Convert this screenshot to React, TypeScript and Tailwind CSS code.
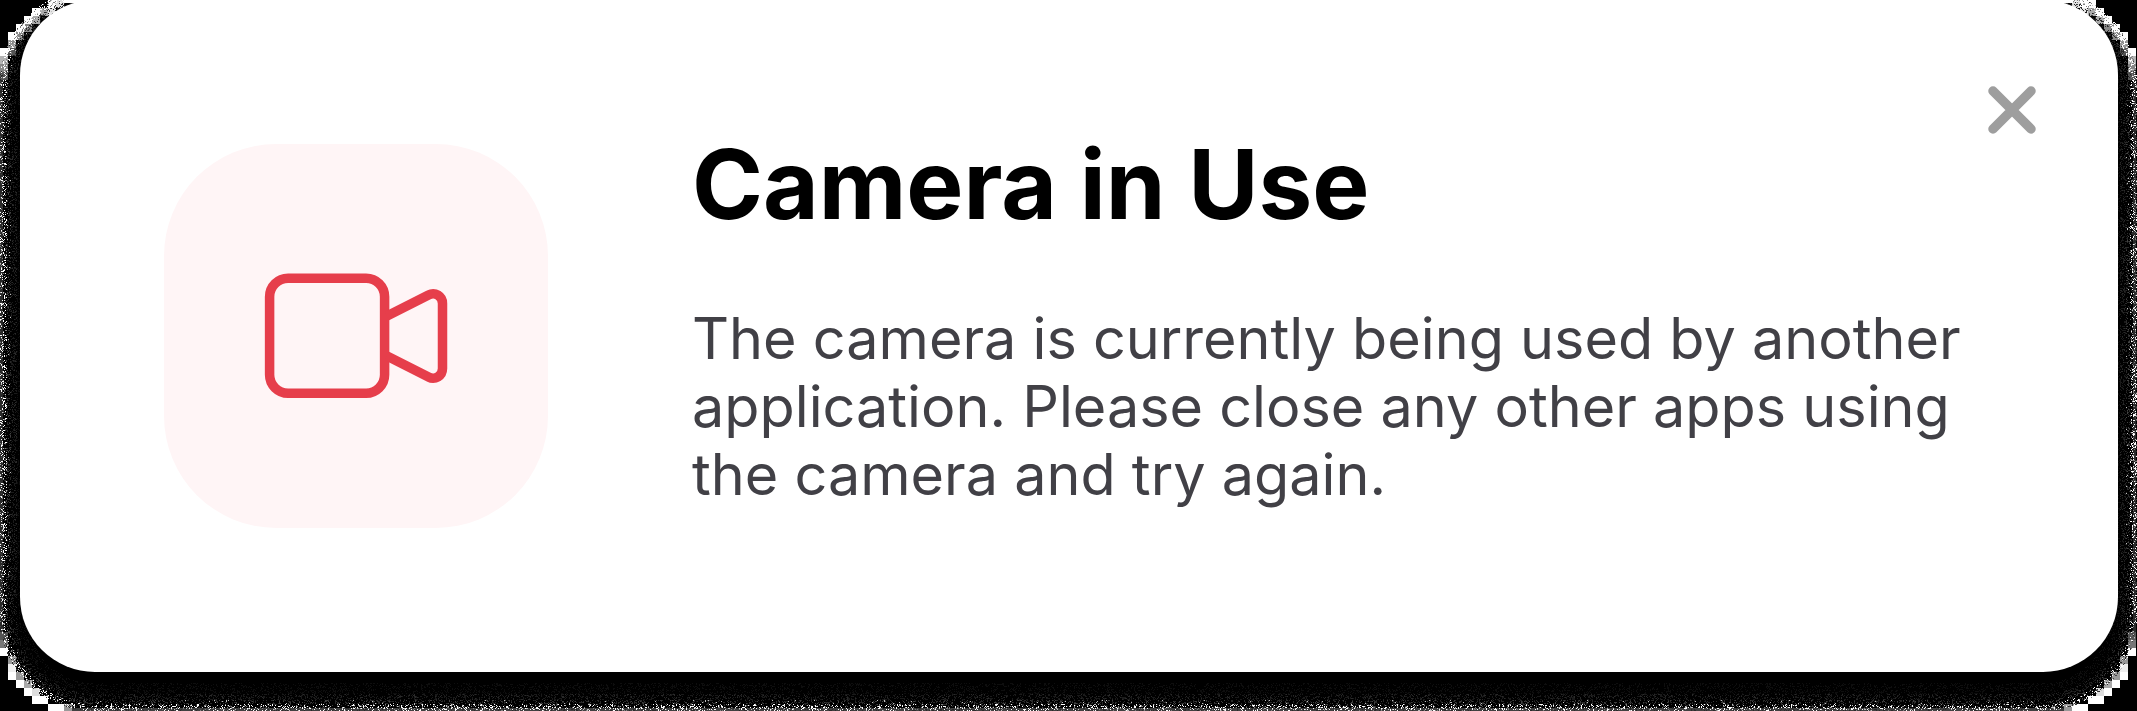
const FONT = "font-['Inter',sans-serif]";

type Cell = [number, number, string];

const SHADES = ["#0e0e0e", "#1a1a1a", "#2a2a2a", "#424242", "#808080", "#c0c0c0", "#ffffff"];

const WIDTH = 2137;
const HEIGHT = 711;

/* Distance to the rounded outline of the shadow, which is lower than the card. */
function shadowDistance(x: number, y: number) {
  const r = 94;
  const dx = Math.abs(x - 1068.5) - (1068.5 - r);
  const dy = Math.abs(y - 350) - (361 - r);
  const outside = Math.hypot(Math.max(dx, 0), Math.max(dy, 0));
  return r - outside - Math.min(Math.max(dx, dy), 0);
}

function inCard(x: number, y: number) {
  const r = 75;
  const dx = Math.max(Math.abs(x - 1069) - (1049 - r), 0);
  const dy = Math.max(Math.abs(y - 336) - (336 - r), 0);
  return Math.hypot(dx, dy) < r - 1;
}

function buildGrain() {
  const paths = SHADES.map(() => "");
  let seed = 7919;
  const random = () => {
    seed = (Math.imul(seed, 1664525) + 1013904223) >>> 0;
    return seed / 4294967296;
  };
  for (let y = 0; y < HEIGHT; y++) {
    for (let x = 0; x < WIDTH; x++) {
      if (x === 24 && y > 75 && y < 597) x = 2114;
      if (x === 100 && y < 670) x = 2037;
      if (inCard(x + 0.5, y + 0.5)) continue;
      const d = shadowDistance(x + 0.5, y + 0.5);
      if (d < 0) continue;
      const n = random();
      const m = random();
      const light = y < 70 ? 0.45 : 0.26;
      let shade = -1;
      if (d < 7 && n < light - Math.abs(d - 3.5) * 0.03) shade = m < 0.6 ? 6 : m < 0.75 ? 5 : 4;
      else if (d < 11 && n < 0.45 - d * 0.02) shade = m < 0.06 ? 5 : m < 0.35 ? 3 : 2;
      else if (d < 17 && n < 0.3) shade = m < 0.2 ? 2 : 1;
      else if (d < 28 && n < 0.22) shade = 0;
      if (shade >= 0) paths[shade] += `M${x} ${y}h1v1h-1z`;
    }
  }
  return paths;
}

const GRAIN = buildGrain();

/* Eight-pixel steps along the outer corners: column, row, colour. */
const STEPS: Cell[] = [
  [6, 0, "#fff"], [7, 0, "#e0e0e0"], [5, 1, "#aaa"], [4, 1, "#fff"], [6, 1, "#e5e5e5"],
  [3, 2, "#fff"], [4, 2, "#aaa"], [2, 3, "#fff"], [3, 3, "#888"], [1, 4, "#fff"], [2, 4, "#888"],
  [1, 5, "#999"], [0, 6, "#fff"], [1, 6, "#555"], [0, 7, "#b4b4b4"], [0, 8, "#888"], [0, 9, "#555"],
];

const BOTTOM_STEPS: Cell[] = [
  [0, 79, "#555"], [0, 80, "#777"], [0, 81, "#fff"], [1, 82, "#999"], [1, 83, "#eee"], [1, 84, "#fff"],
  [2, 84, "#999"], [2, 85, "#fff"], [3, 85, "#aaa"], [3, 86, "#fff"], [4, 86, "#ddd"], [4, 87, "#fff"],
  [5, 87, "#fff"], [6, 88, "#fff"], [7, 88, "#fff"], [8, 88, "#999"],
];

function Steps({ cells }: { cells: Cell[] }) {
  return (
    <>
      {cells.map(([c, r, fill]) => (
        <rect key={`${c}-${r}`} x={c * 8} y={r * 8} width="8" height="8" fill={fill} />
      ))}
    </>
  );
}

function Corners() {
  return (
    <>
      <Steps cells={STEPS} />
      <Steps cells={BOTTOM_STEPS} />
      <rect x="0" y="80" width="3" height="552" fill="#2a2a2a" />
    </>
  );
}

function ShadowTexture() {
  return (
    <svg
      className="pointer-events-none absolute inset-0"
      width="2137"
      height="711"
      viewBox="0 0 2137 711"
      shapeRendering="crispEdges"
      aria-hidden="true"
    >
      <rect x="72" y="708" width="1992" height="3" fill="#404040" />
      <Corners />
      <g transform="translate(2136 0) scale(-1 1)">
        <Corners />
        <rect x="40" y="0" width="8" height="8" fill="#fff" />
      </g>
      {GRAIN.map((d, i) => (
        <path key={SHADES[i]} d={d} fill={SHADES[i]} />
      ))}
      <path d="M64 0H104V3H64zM2033 0H2073V3H2033z" fill="#fff" />
    </svg>
  );
}

function CameraIcon() {
  return (
    <svg width="192" height="192" viewBox="260 240 192 192" fill="none" stroke="#e63e4b" strokeWidth="9.5" aria-hidden="true">
      <rect x="269.6" y="278.2" width="115" height="115" rx="18.5" />
      <path d="M387 316 L428.5 295 C435 291.5 442.5 296 442.5 303.5 V368.5 C442.5 376 435 380.5 428.5 377 L387 356" />
    </svg>
  );
}

export default function App() {
  return (
    <main className={`relative h-[711px] w-[2137px] overflow-hidden bg-black px-5 ${FONT}`}>
      <ShadowTexture />
      <section className="relative flex h-[672px] w-[2098px] items-start rounded-[75px] bg-white pt-36 pl-36">
        <div className="flex size-96 shrink-0 items-center justify-center rounded-[112px] bg-[#fff5f6]">
          <CameraIcon />
        </div>
        <div className="ml-36 w-[1300px] shrink-0">
          <h1 className="-mt-[18px] text-[96px] leading-[116px] font-bold whitespace-nowrap text-black">
            Camera in Use
          </h1>
          <p className="mt-[62px] text-[57.5px] leading-[68px] whitespace-nowrap text-[#414046]">
            The camera is currently being used by another
            <br />
            application. Please close any other apps using
            <br />
            the camera and try again.
          </p>
        </div>
        <button type="button" aria-label="Close" className="absolute top-[86px] right-[82px] size-12">
          <svg width="48" height="48" viewBox="0 0 48 48" stroke="#9e9e9e" strokeWidth="9.5" strokeLinecap="round">
            <path d="M5 5 L43 43 M43 5 L5 43" />
          </svg>
        </button>
      </section>
    </main>
  );
}
